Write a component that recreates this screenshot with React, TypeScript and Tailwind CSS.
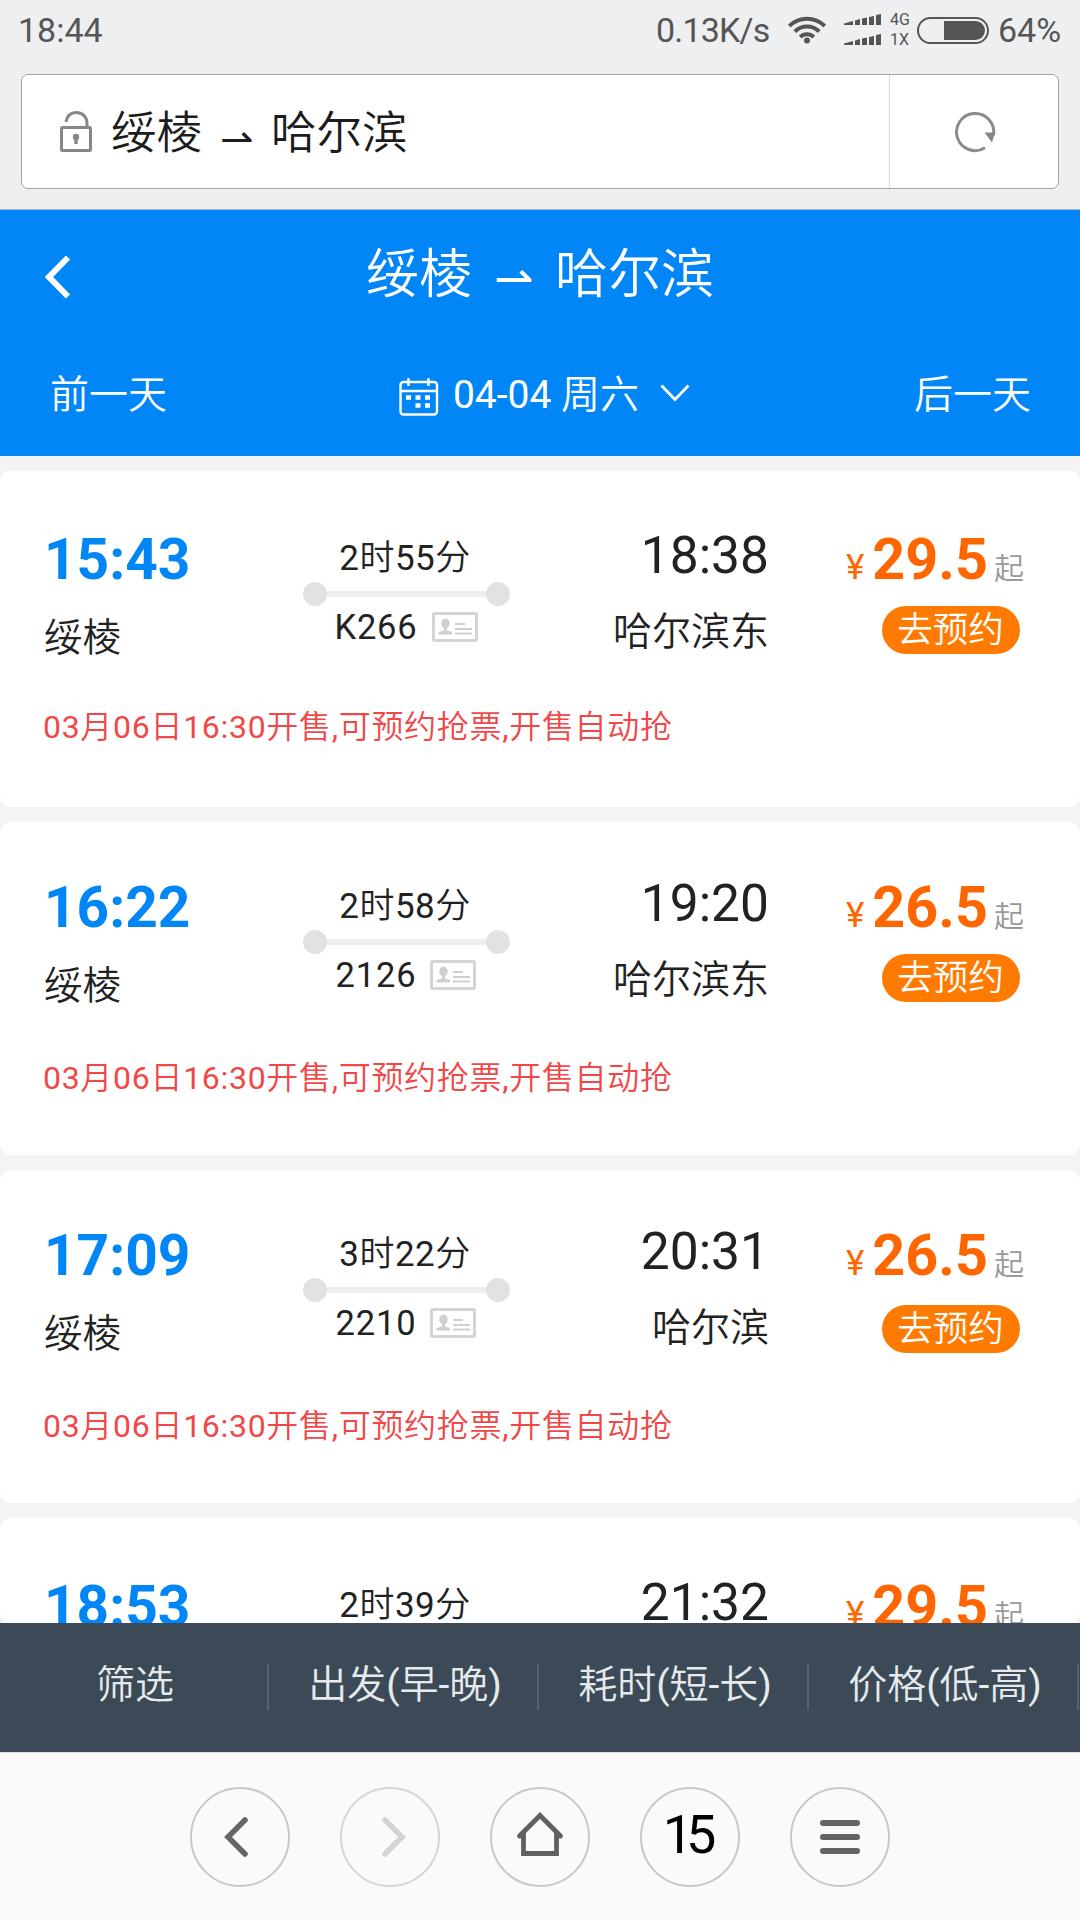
import React from 'react';

interface Train {
  depart: string;
  from?: string;
  duration: string;
  number?: string;
  arrive: string;
  to?: string;
  price: string;
  note?: string;
  card: string;
  button?: string;
}

const note = '03月06日16:30开售,可预约抢票,开售自动抢';

const trains: Train[] = [
  { depart: '15:43', from: '绥棱', duration: '2时55分', number: 'K266', arrive: '18:38', to: '哈尔滨东', price: '29.5', note, card: 'h-[336px] pt-[55px] gap-0', button: 'mt-[2px]' },
  { depart: '16:22', from: '绥棱', duration: '2时58分', number: '2126', arrive: '19:20', to: '哈尔滨东', price: '26.5', note, card: 'h-[333px] pt-[52px] gap-[3px]', button: 'mt-[2px]' },
  { depart: '17:09', from: '绥棱', duration: '3时22分', number: '2210', arrive: '20:31', to: '哈尔滨', price: '26.5', note, card: 'h-[333px] pt-[52px] gap-[3px]', button: 'mt-[5px]' },
  { depart: '18:53', duration: '2时39分', arrive: '21:32', price: '29.5', card: 'h-[105px] pt-[55px]' },
];

const filters = ['筛选', '出发(早-晚)', '耗时(短-长)', '价格(低-高)'];

function StatusBar() {
  return (
    <div className="flex h-[60px] items-center pl-[18px] text-[34px] leading-[60px] text-[#555]">
      <span className="w-[638px]">18:44</span>
      <span className="w-[132px] tracking-[-0.8px]">0.13K/s</span>
      <svg className="w-[38px] h-[28px] mr-[18px]" viewBox="0 0 38 28" fill="none" stroke="#555" strokeWidth="4">
        <path d="M1.3 10a25 25 0 0 1 35.4 0M6.8 15.5a17.3 17.3 0 0 1 24.4 0M12.2 21a9.6 9.6 0 0 1 13.6 0" />
        <circle cx="19" cy="24.5" r="3" fill="#555" stroke="none" />
      </svg>
      <svg className="w-[38px] h-[32px] mr-[8px]" viewBox="0 0 38 32" fill="#555">
        <path d="M0 11V9.6L9 7v4zM11 11V6.5L16 5v6zM18 11V4.5l5-1V11zM25 11V3l5-1v9zM32 11V1l5-1v11z" />
        <path d="M0 31v-1.4L9 27v4zM11 31v-4.5l5-1.5v6zM18 31v-6.5l5-1V31zM25 31v-8l5-1v9zM32 31V21l5-1v11z" />
      </svg>
      <span className="flex w-[27px] flex-col text-[16px] leading-[20px]">
        <span>4G</span>
        <span>1X</span>
      </span>
      <span className="flex w-[72px] h-[27px] items-center justify-end rounded-full border-2 border-[#555] pr-[2px] mr-[9px]">
        <span className="w-[41px] h-[19px] rounded-r-full bg-[#555]" />
      </span>
      <span>64%</span>
    </div>
  );
}

function AddressBar() {
  return (
    <div className="flex h-[115px] mx-[21px] mt-[14px] bg-white border border-[#a2a4a6] rounded-[7px]">
      <div className="flex flex-1 items-center pl-[38px]">
        <svg className="w-[32px] h-[41px] mr-[19px] -mt-px" viewBox="0 0 32 41" fill="none" stroke="#878787" strokeWidth="3">
          <rect x="1.5" y="16.5" width="29" height="23" rx="1" />
          <path d="M6 11C7 5 11 1.5 16.5 1.5c6.5 0 10.5 5 10.5 11V16" />
          <circle cx="16" cy="26" r="3.2" fill="#878787" stroke="none" />
          <path d="M16 26v7" strokeWidth="3.4" />
        </svg>
        <div className="flex items-center pt-[5px] text-[45.5px] leading-[60px] text-[#1c1c1c]">
          <span>绥棱</span>
          <span className="w-[69px] pt-[9px] text-center text-[40px] leading-[60px] font-extralight font-['DejaVu_Sans']">⇀</span>
          <span>哈尔滨</span>
        </div>
      </div>
      <div className="flex w-[169px] items-center justify-center border-l border-[#d9d9d9] pl-px">
        <svg className="w-[42px] h-[42px]" viewBox="0 0 42 42" fill="none">
          <path d="M39.5 24A18.6 18.6 0 1 0 31 36.8" stroke="#8a8a8a" strokeWidth="3" />
          <path d="M30.5 21.5h10.5l-3 10z" fill="#858585" />
        </svg>
      </div>
    </div>
  );
}

function Header() {
  return (
    <div className="h-[247px] border-t border-[#a9b9c6] bg-[#0086f6] text-white">
      <div className="flex h-[125px] items-center pl-[45px] pr-[44px]">
        <svg className="w-[26px] h-[44px] mt-[8px]" viewBox="0 0 26 44" fill="none" stroke="#fff" strokeWidth="6">
          <path d="M23 2.5L4 22l19 19.5" />
        </svg>
        <div className="flex flex-1 items-center pl-[295px] pt-1 text-[53px] leading-[70px]">
          <span>绥棱</span>
          <span className="w-[83px] pt-[8px] text-center text-[47px] leading-[70px] font-extralight font-['DejaVu_Sans']">⇀</span>
          <span>哈尔滨</span>
        </div>
      </div>
      <div className="flex h-[120px] items-center justify-between pl-[50px] pr-[49px] text-[39px]">
        <span>前一天</span>
        <div className="flex items-center pl-2">
          <svg className="w-[40px] h-[38px] mr-[14px] mt-[3px]" viewBox="0 0 40 38" fill="none" stroke="#fff" strokeWidth="2.4">
            <rect x="1.5" y="4" width="36.5" height="32.5" rx="3" />
            <path d="M1.5 13h36.5M9.5 0v8M29.5 0v8" />
            <path d="M7 19.5h5M16.5 19.5h5M26 19.5h5M16.5 27.5h5M26 27.5h5" strokeWidth="4.5" />
          </svg>
          <span>04-04 周六</span>
          <svg className="w-[30px] h-[18px] ml-[21px] -mt-1" viewBox="0 0 30 18" fill="none" stroke="#fff" strokeWidth="2.8">
            <path d="M1.5 1.5L15 15.5l13.5-14" />
          </svg>
        </div>
        <span>后一天</span>
      </div>
    </div>
  );
}

function IdCard() {
  return (
    <svg className="w-[46px] h-[30px]" viewBox="0 0 46 30">
      <rect x="1.5" y="1.5" width="43" height="27" rx="1" fill="#fff" stroke="#d4d4d4" strokeWidth="3" />
      <ellipse cx="13.5" cy="11.5" rx="4.2" ry="5" fill="#cfcfcf" />
      <path d="M12 15h3v3.5l5 1.5v2.5H6.5V20l5.5-1.5z" fill="#cfcfcf" />
      <path d="M23 12h10M23 17h17M23 21.5h17" stroke="#cfcfcf" strokeWidth="2" />
    </svg>
  );
}

function TrainCard({ train }: { train: Train }) {
  return (
    <div className={`${train.card} flex shrink-0 flex-col rounded-[12px] bg-white pl-[44px] pr-[56px] text-[#222]`}>
      <div className="flex h-[180px] shrink-0">
        <div className="w-[259px]">
          <div className="text-[56.8px] leading-[68px] font-bold text-[#0086f6]">{train.depart}</div>
          {train.from && <div className="mt-[14px] text-[38.5px] leading-[60px]">{train.from}</div>}
        </div>
        <div className="flex w-[207px] flex-col items-center">
          <div className="h-[56px] -ml-[3px] text-[35px] leading-[65px] tracking-[0.5px]">{train.duration}</div>
          {train.number && (
            <>
              <div className="flex w-[207px] h-[24px] items-center">
                <span className="w-[24px] h-[24px] rounded-full bg-[#e2e2e2]" />
                <span className="flex-1 h-[6px] bg-[#eee]" />
                <span className="w-[24px] h-[24px] rounded-full bg-[#e2e2e2]" />
              </div>
              <div className="-ml-px flex items-center gap-[14px] text-[34.5px] leading-[42px] tracking-[0.8px]">
                <span>{train.number}</span>
                <IdCard />
              </div>
            </>
          )}
        </div>
        <div className="w-[259px] text-right">
          <div className="text-[51.5px] leading-[60px]">{train.arrive}</div>
          {train.to && <div className="mt-[16px] text-[39px] leading-[60px]">{train.to}</div>}
        </div>
        <div className="flex flex-1 flex-col items-end">
          <div className="flex h-[78px] items-baseline whitespace-nowrap leading-[68px] text-[#ff6600]">
            <span className="text-[35px] mr-[8px]">¥</span>
            <span className="text-[57.5px] font-bold">{train.price}</span>
            <span className="text-[30px] ml-[6px] text-[#999]">起</span>
          </div>
          {train.button && (
            <button className={`${train.button} w-[138px] h-[48px] mr-[4px] shrink-0 rounded-full bg-[#ff7a00] pr-px text-[35.5px] leading-[48px] text-white`}>去预约</button>
          )}
        </div>
      </div>
      {train.note && (
        <div className="-ml-px text-[32px] leading-[43px] tracking-[0.7px] text-[#f04848]">{train.note}</div>
      )}
    </div>
  );
}

function FilterBar() {
  return (
    <div className="flex h-[129px] shrink-0 items-center bg-[#3b4a56] pb-[2px] text-[39px] text-[#e6eaed]">
      {filters.map((label) => (
        <div key={label} className="-ml-px mr-px flex w-[270px] h-[46px] items-center justify-center border-r-2 border-[#566470] pl-1 pb-[3px]">
          {label}
        </div>
      ))}
    </div>
  );
}

function BrowserNav() {
  const circle = 'flex size-[100px] items-center justify-center rounded-full border-2';
  return (
    <div className="flex h-[168px] shrink-0 items-center justify-center gap-[50px] border-t border-[#ddd] bg-[#fafafa]">
      <div className={`${circle} border-[#c8c8c8]`}>
        <svg className="w-[26px] h-[42px] -ml-2" viewBox="0 0 26 42" fill="none" stroke="#666" strokeWidth="5.5" strokeLinecap="round">
          <path d="M22 4L5 21l17 17" />
        </svg>
      </div>
      <div className={`${circle} border-[#d6d6d6]`}>
        <svg className="w-[26px] h-[42px] ml-2" viewBox="0 0 26 42" fill="none" stroke="#d4d4d4" strokeWidth="5.5" strokeLinecap="round">
          <path d="M4 4l17 17L4 38" />
        </svg>
      </div>
      <div className={`${circle} border-[#c8c8c8]`}>
        <svg className="w-[48px] h-[46px] -mt-1" viewBox="0 0 48 46" fill="none" stroke="#606060" strokeWidth="4.8" strokeLinecap="round">
          <path d="M3.5 24L24 3.5 44.5 24" />
          <path d="M7.5 22v19.5h33V22" />
        </svg>
      </div>
      <div className={`${circle} border-[#c8c8c8] pr-2 pb-1 text-[54px] tracking-[-7px] text-black`}>15</div>
      <div className={`${circle} border-[#c8c8c8]`}>
        <span className="flex w-[40px] flex-col gap-2">
          <span className="h-[6px] rounded-full bg-[#636363]" />
          <span className="h-[6px] rounded-full bg-[#636363]" />
          <span className="h-[6px] rounded-full bg-[#636363]" />
        </span>
      </div>
    </div>
  );
}

export default function App() {
  return (
    <div className="flex h-[1920px] w-[1080px] flex-col overflow-hidden bg-[#f4f4f4] font-['Roboto','Noto_Sans_CJK_SC_DemiLight','Noto_Sans_CJK_SC',sans-serif]">
      <div className="h-[209px] shrink-0 bg-[#edeff1]">
        <StatusBar />
        <AddressBar />
      </div>
      <Header />
      <div className="flex min-h-0 flex-1 flex-col gap-[15px] overflow-hidden pt-[15px]">
        {trains.map((train) => (
          <TrainCard key={train.depart} train={train} />
        ))}
      </div>
      <FilterBar />
      <BrowserNav />
    </div>
  );
}
